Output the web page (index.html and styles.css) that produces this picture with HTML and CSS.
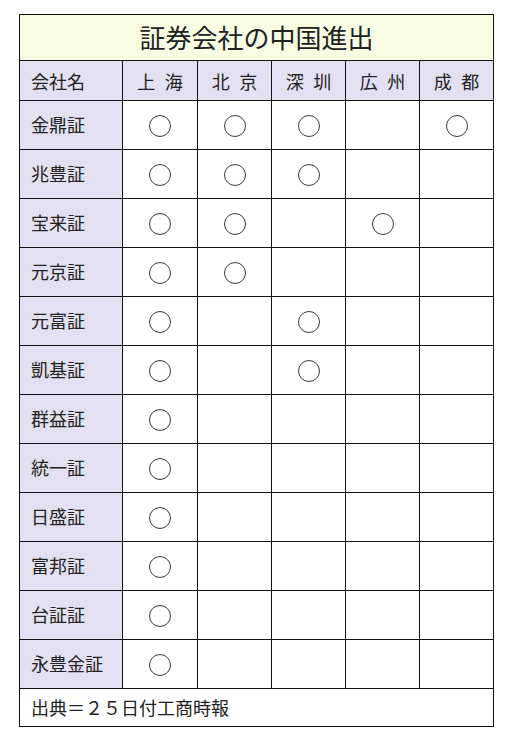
FILE: index.html
```html
<!DOCTYPE html>
<html lang="ja">
<head>
<meta charset="utf-8">
<title>証券会社の中国進出</title>
<link rel="stylesheet" href="styles.css">
</head>
<body>
<div class="chart">
  <div class="title">証券会社の中国進出</div>
  <div class="hd name">会社名</div>
  <div class="hd">上 海</div>
  <div class="hd">北 京</div>
  <div class="hd">深 圳</div>
  <div class="hd">広 州</div>
  <div class="hd">成 都</div>

  <div class="name">金鼎証</div><div class="c"><span class="o"></span></div><div class="c"><span class="o"></span></div><div class="c"><span class="o"></span></div><div class="c"></div><div class="c"><span class="o"></span></div>
  <div class="name">兆豊証</div><div class="c"><span class="o"></span></div><div class="c"><span class="o"></span></div><div class="c"><span class="o"></span></div><div class="c"></div><div class="c"></div>
  <div class="name">宝来証</div><div class="c"><span class="o"></span></div><div class="c"><span class="o"></span></div><div class="c"></div><div class="c"><span class="o"></span></div><div class="c"></div>
  <div class="name">元京証</div><div class="c"><span class="o"></span></div><div class="c"><span class="o"></span></div><div class="c"></div><div class="c"></div><div class="c"></div>
  <div class="name">元富証</div><div class="c"><span class="o"></span></div><div class="c"></div><div class="c"><span class="o"></span></div><div class="c"></div><div class="c"></div>
  <div class="name">凱基証</div><div class="c"><span class="o"></span></div><div class="c"></div><div class="c"><span class="o"></span></div><div class="c"></div><div class="c"></div>
  <div class="name">群益証</div><div class="c"><span class="o"></span></div><div class="c"></div><div class="c"></div><div class="c"></div><div class="c"></div>
  <div class="name">統一証</div><div class="c"><span class="o"></span></div><div class="c"></div><div class="c"></div><div class="c"></div><div class="c"></div>
  <div class="name">日盛証</div><div class="c"><span class="o"></span></div><div class="c"></div><div class="c"></div><div class="c"></div><div class="c"></div>
  <div class="name">富邦証</div><div class="c"><span class="o"></span></div><div class="c"></div><div class="c"></div><div class="c"></div><div class="c"></div>
  <div class="name">台証証</div><div class="c"><span class="o"></span></div><div class="c"></div><div class="c"></div><div class="c"></div><div class="c"></div>
  <div class="name">永豊金証</div><div class="c"><span class="o"></span></div><div class="c"></div><div class="c"></div><div class="c"></div><div class="c"></div>

  <div class="foot">出典＝２５日付工商時報</div>
</div>
</body>
</html>
```

FILE: styles.css
```css
html, body {
  margin: 0;
  padding: 0;
  background: #ffffff;
}
body {
  font-family: "Noto Sans CJK JP", "Noto Sans", sans-serif;
  color: #222222;
}
.chart {
  margin: 14px 0 0 19px;
  width: 475px;
  box-sizing: border-box;
  display: grid;
  grid-template-columns: 102px 74px 73px 73px 73px 73px;
  grid-template-rows: 45px 39px repeat(12, 48px) 37px;
  gap: 1px;
  padding: 1px;
  background: #111111;
}
.chart > div {
  display: flex;
  align-items: center;
  justify-content: center;
  background: #ffffff;
  font-size: 18px;
  line-height: 1;
}
.chart > .title {
  grid-column: 1 / -1;
  background: #f8fce2;
  font-size: 26px;
  padding-bottom: 2px;
}
.chart > .name {
  background: #e3e0f1;
  justify-content: flex-start;
  padding-left: 11px;
  padding-bottom: 2px;
}
.chart > .hd {
  background: #e3e0f1;
  word-spacing: 5.5px;
  padding-top: 1px;
  padding-bottom: 0;
}
.chart > .foot {
  grid-column: 1 / -1;
  justify-content: flex-start;
  padding-left: 11px;
  padding-bottom: 2px;
}
.o {
  display: block;
  width: 20px;
  height: 20px;
  margin-top: 2px;
  border: 1px solid #3a3a3a;
  border-radius: 50%;
}
```
